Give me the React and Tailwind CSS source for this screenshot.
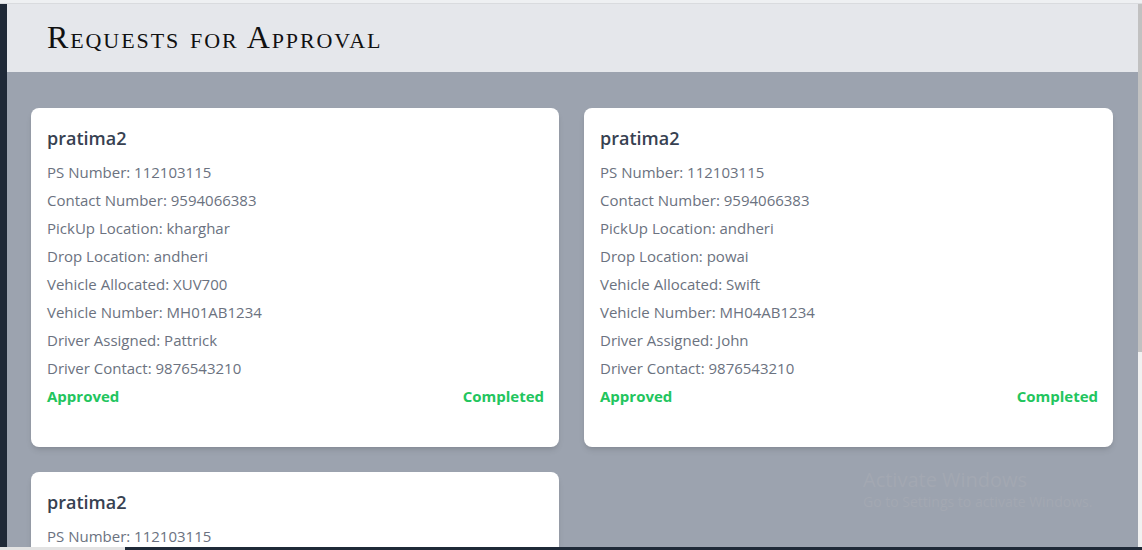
import React from 'react';

const requests = [
  {
    id: 1,
    name: 'pratima2',
    psNumber: '112103115',
    contact: '9594066383',
    pickup: 'kharghar',
    drop: 'andheri',
    vehicle: 'XUV700',
    vehicleNumber: 'MH01AB1234',
    driver: 'Pattrick',
    driverContact: '9876543210',
  },
  {
    id: 2,
    name: 'pratima2',
    psNumber: '112103115',
    contact: '9594066383',
    pickup: 'andheri',
    drop: 'powai',
    vehicle: 'Swift',
    vehicleNumber: 'MH04AB1234',
    driver: 'John',
    driverContact: '9876543210',
  },
  {
    id: 3,
    name: 'pratima2',
    psNumber: '112103115',
    contact: '9594066383',
    pickup: 'thane',
    drop: 'andheri',
    vehicle: 'XUV700',
    vehicleNumber: 'MH01AB1234',
    driver: 'Pattrick',
    driverContact: '9876543210',
  },
];

function RequestCard({ req }) {
  const rows = [
    ['PS Number', req.psNumber],
    ['Contact Number', req.contact],
    ['PickUp Location', req.pickup],
    ['Drop Location', req.drop],
    ['Vehicle Allocated', req.vehicle],
    ['Vehicle Number', req.vehicleNumber],
    ['Driver Assigned', req.driver],
    ['Driver Contact', req.driverContact],
  ];

  return (
    <div className="bg-white rounded-lg shadow-md pl-4 pr-[15px] pt-4 pb-[39px]">
      <h2 className="text-lg leading-7 font-semibold text-[#374151] mb-2">{req.name}</h2>
      {rows.map(([label, value]) => (
        <p key={label} className="text-[15px] leading-6 mb-1 text-[#6b7280]">
          {label}: {value}
        </p>
      ))}
      <div className="flex justify-between text-[15px] leading-6 font-bold text-[#22c55e]">
        <span>Approved</span>
        <span>Completed</span>
      </div>
    </div>
  );
}

export default function App() {
  return (
    <div
      className="h-[550px] w-full flex flex-col overflow-hidden bg-[#9ca3af]"
      style={{ fontFamily: '"Open Sans", sans-serif' }}
    >
      {/* top edge */}
      <div className="h-[4px] shrink-0 bg-[#eef0f2] border-b border-[#d9dbde]" />

      <div className="flex flex-1 min-h-0">
        {/* sidebar edge */}
        <div className="w-[7px] shrink-0 bg-[#1f2937]" />

        {/* main */}
        <div className="flex-1 min-w-0 flex flex-col relative">
          <div className="h-[68px] shrink-0 bg-[#e5e7eb] flex items-center pl-10">
            <h1
              className="text-[32px] leading-none text-[#111] tracking-[1.9px] pb-[2px]"
              style={{ fontFamily: '"Liberation Serif", serif', fontVariant: 'small-caps' }}
            >
              Requests for Approval
            </h1>
          </div>

          <div className="flex-1 min-h-0 overflow-hidden pl-6 pt-9">
            <div className="grid grid-cols-[528px_529px] gap-[25px]">
              {requests.map((req) => (
                <RequestCard key={req.id} req={req} />
              ))}
            </div>
          </div>

          {/* windows watermark */}
          <div className="absolute left-[856px] top-[464px] text-[#a3a8b2] pointer-events-none">
            <p className="text-[20px] leading-6">Activate Windows</p>
            <p className="text-[14px] leading-5">Go to Settings to activate Windows.</p>
          </div>
        </div>

        {/* scrollbar */}
        <div className="w-[4px] shrink-0 bg-[#f1f1f1] flex flex-col">
          <div className="h-[348px] bg-[#c1c1c1]" />
        </div>
      </div>

      {/* taskbar edge */}
      <div className="h-[3px] shrink-0 flex">
        <div className="w-[125px] bg-[#e3e3e3]" />
        <div className="flex-1 bg-[#1f2a38]" />
      </div>
    </div>
  );
}
